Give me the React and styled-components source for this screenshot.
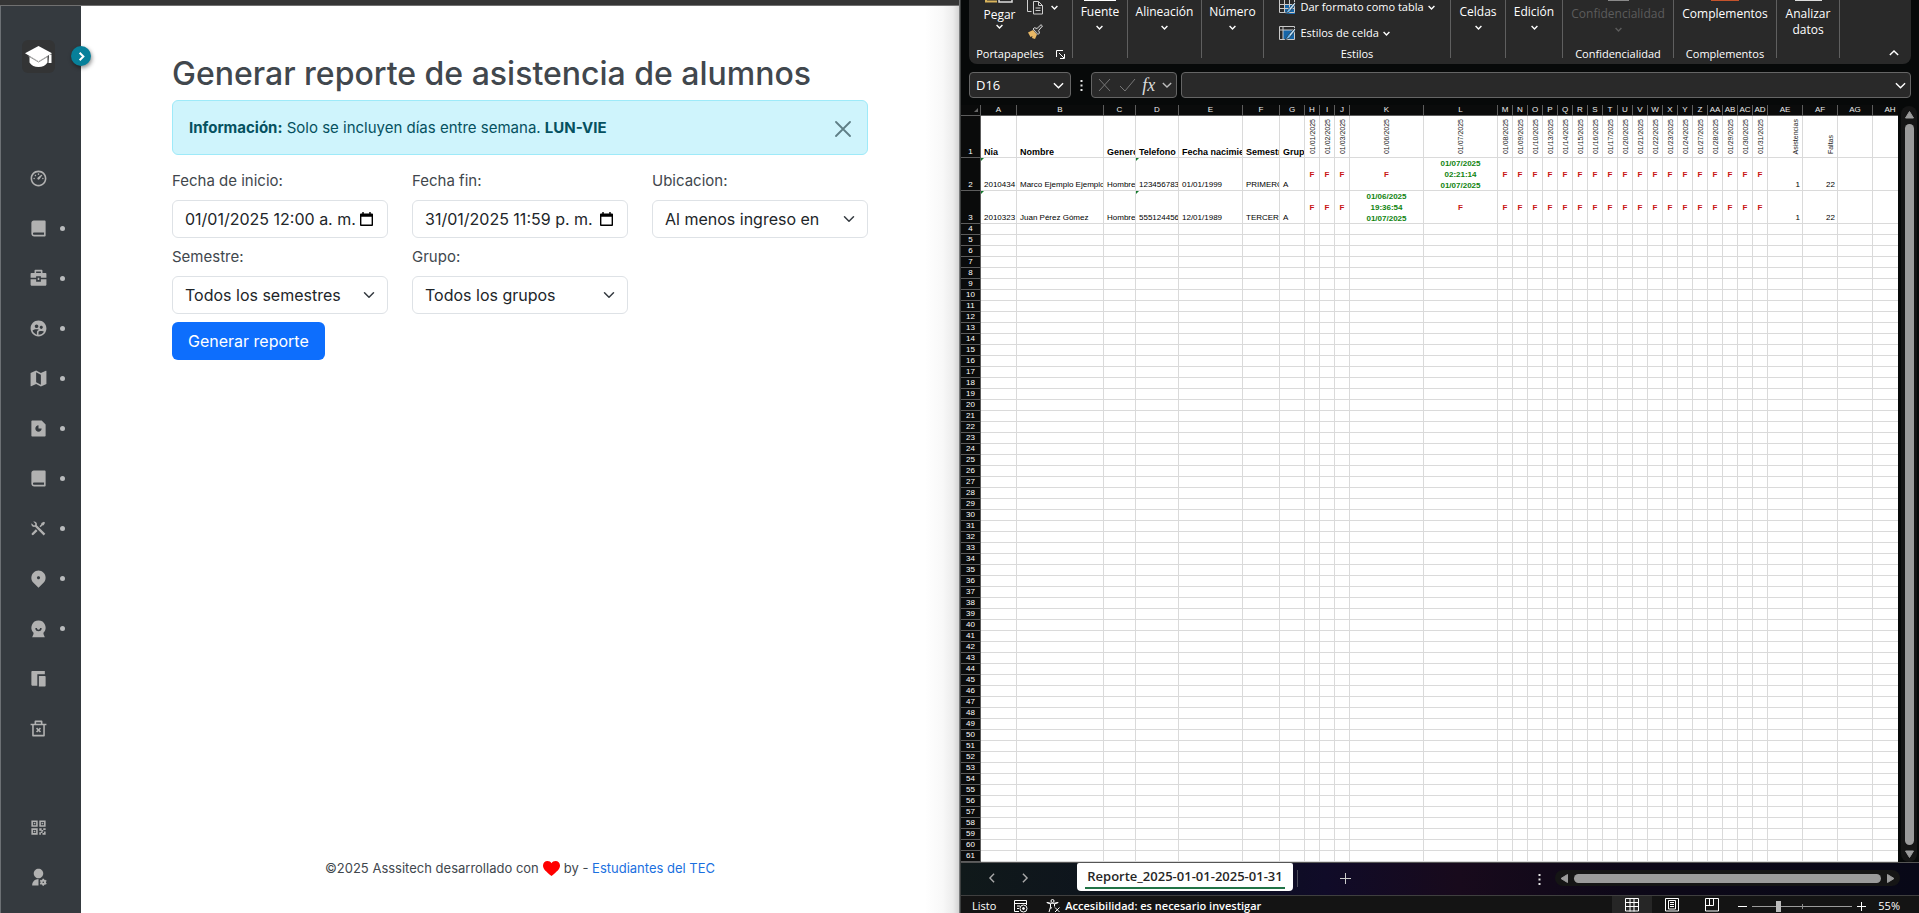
import React from 'react';
import styled, { createGlobalStyle } from 'styled-components';
import {
  RiDashboard3Line, RiBookFill, RiBriefcase4Fill, RiGroup2Fill, RiMap2Fill, RiFileChart2Fill,
  RiToolsFill, RiMapPin2Fill, RiDeleteBin2Line, RiQrCodeLine, RiUserSettingsFill,
} from 'react-icons/ri';

const Global = createGlobalStyle`
  *, *::before, *::after { box-sizing: border-box; }
  body { margin: 0; background: #070909; }
  button, input, select { font: inherit; color: inherit; margin: 0; }
  button { border: 0; background: none; padding: 0; }
  a { color: inherit; text-decoration: none; }
`;

const Desktop = styled.div`
  display: grid;
  grid-template-columns: minmax(0, 960fr) minmax(0, 959fr);
  min-height: 100vh;
`;

/* ---------- Web application ---------- */

const WebWindow = styled.div`
  display: flex;
  flex-direction: column;
  border-left: 1px solid #6c7074;
  border-right: 1px solid #77797a;
  background: #fff;
  font-family: Inter, 'Open Sans', sans-serif;
  color: #41474d;
`;
const BrowserEdge = styled.div`
  height: 6px;
  margin-left: -1px;
  background: #353535;
  border-bottom: 1px solid #707070;
`;
const WebBody = styled.div`
  flex: 1;
  display: flex;
`;
const Sidebar = styled.aside`
  position: relative;
  flex: 0 0 80px;
  display: flex;
  flex-direction: column;
  padding: 34px 0 12px;
  background: #353a3f;
`;
const Logo = styled.a`
  display: grid;
  place-items: center;
  width: 33px;
  height: 33px;
  margin: 0 0 80px 21px;
  border-radius: 6px;
  background: #333435;
`;
const Toggle = styled.button`
  position: absolute;
  top: 40px;
  right: -10px;
  display: grid;
  place-items: center;
  width: 20px;
  height: 20px;
  border-radius: 50%;
  background: #07809a;
  box-shadow: 1px 2px 4px rgba(0, 0, 0, 0.45);
`;
const NavList = styled.nav`
  display: flex;
  flex-direction: column;
  margin-top: ${(p) => (p.$end ? 'auto' : '0')};
`;
const NavLink = styled.a`
  display: flex;
  align-items: center;
  height: 50px;
  padding-left: 28px;
  gap: 12px;
  color: #b1b1b1;
`;
const Dot = styled.span`
  width: 5px;
  height: 5px;
  border-radius: 50%;
  background: #b9bbbd;
`;
const Main = styled.main`
  flex: 1;
  display: flex;
  flex-direction: column;
  background: linear-gradient(to left, #d4d4d4 0, #ececec 6px, #f8f8f8 16px, #fff 34px);
`;
const Container = styled.div`
  width: 100%;
  max-width: 720px;
  margin: 0 auto;
  padding: 49px 12px 24px;
`;
const Title = styled.h1`
  margin: 0 0 7px;
  font-size: 32px;
  line-height: 38px;
  font-weight: 500;
  white-space: nowrap;
`;
const Alert = styled.div`
  display: flex;
  justify-content: space-between;
  align-items: center;
  height: 55px;
  margin-bottom: 15px;
  padding: 0 16px;
  border: 1px solid #9eeaf9;
  border-radius: 6px;
  background: #cff4fc;
  color: #055160;
  font-size: 15px;
  line-height: 22px;
`;
const CloseButton = styled.button`
  display: grid;
  margin-top: 2px;
  color: #5f7f86;
`;
const FormGrid = styled.form`
  display: grid;
  grid-template-columns: repeat(3, minmax(0, 1fr));
  column-gap: 24px;
  row-gap: 8px;
`;
const Field = styled.div`
  display: flex;
  flex-direction: column;
  gap: 8px;
  font-size: 15px;
  line-height: 22px;
`;
const ControlBox = styled.div`
  display: flex;
  align-items: center;
  height: 38px;
  padding: 0 12px;
  border: 1px solid #dee2e6;
  border-radius: 6px;
  background: #fff;
  color: #212529;
  font-size: 16px;
`;
const DateInput = styled.input`
  flex: 1;
  min-width: 0;
  padding: 0;
  border: 0;
  outline: 0;
  background: none;
`;
const Picker = styled.button`
  display: grid;
  margin-right: 2px;
`;
const Select = styled.select`
  flex: 1;
  min-width: 0;
  padding: 0;
  border: 0;
  outline: 0;
  appearance: none;
  background: none;
`;
const Submit = styled.button`
  justify-self: start;
  height: 38px;
  padding: 0 16px;
  border-radius: 6px;
  background: #0d6efd;
  color: #fff;
  font-size: 16px;
  white-space: nowrap;
`;
const Footer = styled.footer`
  display: flex;
  justify-content: center;
  align-items: center;
  gap: 4px;
  margin-top: auto;
  padding-bottom: 36px;
  font-size: 13px;
  line-height: 20px;
`;
const FooterLink = styled.a`
  color: #1a70e0;
`;

/* ---------- Spreadsheet ---------- */

const SheetWindow = styled.div`
  display: flex;
  flex-direction: column;
  border-left: 1px solid #3d3f3f;
  background: #070909;
  color: #fff;
  font-family: 'Open Sans', 'Noto Sans', sans-serif;
  font-size: 12px;
`;
const Ribbon = styled.div`
  display: flex;
  height: 64px;
  margin: 0 8px;
  padding-bottom: 6px;
  border-radius: 0 0 8px 8px;
  background: #292929;
  overflow: hidden;
`;
const Group = styled.section`
  flex: 0 1 ${(p) => p.$w}px;
  display: flex;
  flex-direction: column;
  justify-content: space-between;
  align-items: center;
  border-right: 1px solid #5f5f5f;
  line-height: 16px;
  white-space: nowrap;
`;
const GroupBody = styled.div`
  display: flex;
  gap: ${(p) => p.$gap || 0}px;
`;
const Tool = styled.button`
  display: flex;
  flex-direction: column;
  align-items: center;
  color: ${(p) => (p.$off ? '#5c5c5c' : '#fff')};
  font-size: 12px;
  line-height: 16px;
`;
const IconEdge = styled.span`
  width: ${(p) => p.$w}px;
  height: 1px;
  margin-bottom: ${(p) => p.$gap || 3}px;
  background: ${(p) => p.$c};
`;
const ToolIcon = styled.button`
  display: flex;
  align-items: center;
  gap: 8px;
`;
const Stack = styled.div`
  display: flex;
  flex-direction: column;
  align-items: flex-start;
  gap: ${(p) => p.$gap}px;
`;
const StyleButton = styled.button`
  display: flex;
  align-items: center;
  gap: 4px;
  height: 14px;
  font-size: 11px;
  line-height: 14px;
`;
const GroupName = styled.div`
  display: flex;
  align-items: center;
  gap: 12px;
  margin-bottom: -4px;
  font-size: 11px;
  line-height: 16px;
`;
const RibbonEnd = styled.div`
  flex: 1;
  display: flex;
  justify-content: flex-end;
  align-items: flex-end;
  padding: 0 12px 0 0;
`;
const FormulaRow = styled.div`
  display: flex;
  align-items: center;
  margin: 8px 8px 7px;
`;
const Box = styled.div`
  display: flex;
  align-items: center;
  justify-content: space-between;
  flex: ${(p) => (p.$w ? `0 0 ${p.$w}px` : '1')};
  min-width: 0;
  height: 26px;
  padding: 0 ${(p) => p.$pad || 4}px;
  border: 1px solid #656565;
  border-radius: 4px;
  background: #292929;
`;
const BoxInput = styled.input`
  flex: 1;
  width: 100%;
  min-width: 0;
  padding: 0;
  border: 0;
  outline: 0;
  background: none;
  font-size: 13px;
`;
const Fx = styled.span`
  font: italic 400 18px 'Liberation Serif', serif;
  color: #dcdcdc;
`;
const DotsSlot = styled.div`
  display: grid;
  place-items: center;
  flex: 0 0 20px;
`;
const Spacer = styled.div`
  flex: ${(p) => (p.$w ? `0 0 ${p.$w}px` : '1')};
`;

const SheetArea = styled.div`
  flex: 1;
  display: flex;
  border-bottom: 1px solid #555;
`;
const TableClip = styled.div`
  flex: 1;
  min-width: 0;
  overflow: hidden;
  background: #fff;
`;
const Table = styled.table`
  table-layout: fixed;
  width: 947px;
  border-spacing: 0;
  color: #000;
  font: 8px/10px 'Liberation Sans', Arial, sans-serif;
`;
const ColHead = styled.th`
  height: 11px;
  padding: 0;
  border-right: 1px solid #5d5d5d;
  border-bottom: 1px solid #5d5d5d;
  background: #0a0b0b;
  color: #ededed;
  font-weight: 400;
`;
const RowHead = styled(ColHead)`
  vertical-align: bottom;
  color: #fff;
`;
const Row = styled.tr`
  height: ${(p) => p.$h || 11}px;
`;
const Cell = styled.td`
  position: relative;
  padding: 0 ${(p) => (p.$edge ? 2 : 0)}px 0 ${(p) => (p.$align ? 0 : 3)}px;
  border-right: 1px solid #dadada;
  border-bottom: 1px solid #dadada;
  overflow: hidden;
  white-space: nowrap;
  text-align: ${(p) => p.$align || 'left'};
  vertical-align: ${(p) => (p.$mid ? 'middle' : 'bottom')};
  font-weight: ${(p) => (p.$bold ? 700 : 400)};
  color: ${(p) => p.$c || '#000'};
`;
const Stamp = styled.span`
  display: block;
  margin-bottom: -1px;
  line-height: 11px;
  white-space: pre;
`;
const NameCell = styled(Cell)`
  font-size: 9px;
`;
const Vertical = styled.span`
  display: inline-block;
  writing-mode: vertical-rl;
  transform: rotate(180deg);
  vertical-align: bottom;
  margin-bottom: 3px;
  color: #222;
  font-size: 7px;
  line-height: 9px;
`;
const Flag = styled.span`
  position: absolute;
  top: 0;
  left: 0;
  border-top: 3px solid #137a2c;
  border-right: 3px solid transparent;
`;
const ScrollColumn = styled.div`
  flex: 0 0 21px;
  display: flex;
  padding: 1px 2px 0 3px;
`;
const VTrack = styled.div`
  flex: 1;
  display: flex;
  flex-direction: column;
  align-items: center;
  gap: 5px;
  padding: 4px 0 3px;
  border-radius: 8px;
  background: #151515;
`;
const VThumb = styled.div`
  flex: 1;
  width: 9px;
  border-radius: 5px;
  background: #9b9b9b;
`;
const TabStrip = styled.div`
  display: flex;
  align-items: flex-start;
  height: 32px;
  background: linear-gradient(to right, #10191a 0, #0c1020 28%, #100b28 38%, #180a1c 52%, #0d0818 70%, #080817 100%);
`;
const TabArrows = styled.div`
  flex: 0 0 116px;
  display: flex;
  gap: 23px;
  padding: 10px 0 0 26px;
`;
const SheetTab = styled.button`
  height: 28px;
  min-width: 216px;
  padding: 0 8px;
  border-radius: 2px 2px 4px 4px;
  background: #fff;
  color: #262626;
  font-weight: 600;
  font-size: 13px;
`;
const TabName = styled.span`
  display: block;
  padding-bottom: 1px;
  border-bottom: 2px solid #217346;
  line-height: 20px;
  white-space: nowrap;
`;
const TabRule = styled.span`
  width: 1px;
  height: 17px;
  margin: 7px 0 0 4px;
  background: #4b4b59;
`;
const AddTab = styled.button`
  margin: 8px 0 0 42px;
`;
const StripDots = styled.div`
  margin: 9px 14px 0 auto;
`;
const HTrack = styled.div`
  flex: 0 1 345px;
  display: flex;
  align-items: center;
  gap: 5px;
  height: 16px;
  margin: 7px 19px 0 0;
  padding: 0 5px;
  border-radius: 8px;
  background: #151515;
`;
const HThumb = styled.div`
  flex: 1;
  height: 9px;
  border-radius: 5px;
  background: #9b9b9b;
`;
const StatusBar = styled.div`
  display: flex;
  align-items: center;
  height: 19px;
  padding: 2px 19px 0 11px;
  border-top: 1px solid #3f3f3f;
  background: #141414;
  line-height: 16px;
  white-space: nowrap;
`;
const StatusText = styled.span`
  font-size: 11px;
  font-weight: ${(p) => (p.$bold ? 600 : 400)};
`;
const StatusButton = styled.button`
  display: flex;
  align-items: center;
  gap: 4px;
  margin-left: 18px;
`;
const ViewButton = styled.button`
  display: grid;
  place-items: center;
  width: 40px;
  height: 18px;
  margin-top: -2px;
  background: ${(p) => (p.$on ? '#262626' : 'none')};
`;
const Zoom = styled.input`
  appearance: none;
  width: 100px;
  height: 11px;
  margin: 0 5px;
  background:
    linear-gradient(#8d8d8d, #8d8d8d) 50px 3px / 1px 5px no-repeat,
    linear-gradient(#9b9b9b, #9b9b9b) 0 5px / 100% 1px no-repeat;
  &::-webkit-slider-thumb {
    appearance: none;
    width: 5px;
    height: 11px;
    background: #bcbcbc;
  }
`;

const Chevron = ({ w = 7, dir = 'down', sw = 1.4, c = 'currentColor' }) => {
  const r = { down: 0, up: 180, left: 90, right: 270 }[dir];
  return (
    <svg width={w} height={w} viewBox="0 0 12 12" fill="none" stroke={c} strokeWidth={(sw * 12) / w}>
      <path d="M1 3.5 6 8.5 11 3.5" transform={`rotate(${r} 6 6)`} />
    </svg>
  );
};
const SelectChevron = () => (
  <svg width="12" height="12" viewBox="0 0 16 16" fill="none" stroke="#343a40" strokeWidth="2" strokeLinecap="round" strokeLinejoin="round"><path d="m2 5 6 6 6-6" /></svg>
);
const Triangle = ({ d }) => (
  <svg width="9" height="9" viewBox="0 0 9 9" fill="#9b9b9b" stroke="#9b9b9b" strokeLinejoin="round"><path d={d} /></svg>
);
const Dots = () => (
  <svg width="3" height="11" viewBox="0 0 3 11" fill="#e6e6e6"><path d="M.5 0h2v2h-2zM.5 4.500h2v2h-2zM.5 9h2v2h-2z" /></svg>
);
const Cap = () => (
  <svg width="27" height="22" viewBox="0 0 27 22">
    <path d="M4.500 10v6.500c2 3 5 4.500 9 4.500s7-1.500 9-4.500V10l-9 5z" fill="#fff" />
    <path d="M13.500 0 27 7.200 13.500 15.200 0 7.200z" fill="#fff" />
    <path d="M3 9.800 13.500 16l10-6" fill="none" stroke="#777" strokeWidth=".8" />
    <path d="M24 8.500h2.500V17h-3z" fill="#fff" />
  </svg>
);
const BustIcon = () => (
  <svg width="19" height="19" viewBox="0 0 24 24" fill="currentColor"><path fillRule="evenodd" d="M12 2a9 9 0 0 1 6.300 15.400V19l1.700 4H4l1.700-4v-1.600A9 9 0 0 1 12 2zM8 11.500a4 4 0 0 0 8 0h-2a2 2 0 0 1-4 0z" /></svg>
);
const CopiesIcon = () => (
  <svg width="19" height="19" viewBox="0 0 24 24" fill="currentColor"><path d="M4 2.500h16v4.200H10.500V21H4a1 1 0 0 1-1-1V3.500a1 1 0 0 1 1-1z" /><path d="M12.500 8.700H20a1 1 0 0 1 1 1V21a1 1 0 0 1-1 1h-7.500z" /></svg>
);
const CalendarIcon = () => (
  <svg width="13" height="14" viewBox="0 0 14 15"><path fill="#000" fillRule="evenodd" d="M2.500 0h1.500v1.500h6V0h1.500v1.500H13q1 0 1 1V14q0 1-1 1H1q-1 0-1-1V2.500q0-1 1-1h1.500zM1.500 5v8.500h11V5z" /></svg>
);
const PasteEdge = () => (
  <svg width="28" height="3" viewBox="0 0 28 3" fill="none"><path d="M1 0v1.500h11" stroke="#d9b45c" strokeWidth="2" /><path d="M14 0v2h13V0" stroke="#ddd" strokeWidth="1.500" /></svg>
);
const CopyIcon = () => (
  <svg width="16" height="15" viewBox="0 0 16 15" fill="none" stroke="#cfcfcf"><path d="M4.500 11.500h-4V0" /><path d="M6.500 1.500h5l4 4v8.500h-9zM11.500 1.500v4h4M8.500 8h5M8.500 10.500h5" /></svg>
);
const BrushIcon = () => (
  <svg width="16" height="16" viewBox="0 0 16 16"><path d="M1 8.500 6 6l4 4.500-2 4.500-3-1 .5-2-2 1z" fill="#e8b765" /><path d="m6 5 5 5.500 1.500-1.500-.8-2.500L15.500 2 14 .7 10 4.500 7.500 3.700z" fill="#3a3a3a" stroke="#d8d8d8" /></svg>
);
const LaunchIcon = () => (
  <svg width="9" height="9" viewBox="0 0 9 9" fill="none" stroke="#fff"><path d="M.5 7V.5H7M3 3l5 5M8.500 4v4.500H4" /></svg>
);
const TableStyleIcon = ({ filled }) => (
  <svg width="17" height="15" viewBox="0 0 17 15">
    <path d={filled ? 'M4 4h11v9H4z' : 'M6 5h10v9H6z'} fill="#1565a8" />
    <path d={filled ? 'M.5.5h15v13H.5zM.5 4h15M4 .5v13' : 'M.5 0v12.500h15V0M.5 4.500h15M.5 8.500h15M5.500 0v12.500M10.500 0v12.500'} fill="none" stroke="#c9c9c9" />
    <path d="m16 2-7 7.500-3 4.500 4.500-2L16 5z" fill="#6db8ef" stroke="#292929" strokeWidth=".7" /><path d="m16 3-5 6" stroke="#eee" />
  </svg>
);
const GridIcon = () => (
  <svg width="14" height="14" viewBox="0 0 14 14" fill="none" stroke="#fff"><path d="M.5.5h13v12.500H.5zM.5 4.500h13M.5 8.500h13M5 .5v13M9 .5v13" /></svg>
);
const PageIcon = () => (
  <svg width="14" height="14" viewBox="0 0 14 14" fill="none" stroke="#fff"><path d="M.5.5h13v12.500H.5zM3.500 2.500h7v8.500h-7zM5 4.500h4M5 6.500h4M5 8.500h4" /></svg>
);
const BreakIcon = () => (
  <svg width="14" height="14" viewBox="0 0 14 14" fill="none" stroke="#fff"><path d="M.5.5h13v12.500H.5zM4.500.5v7M8.500.5v7M.5 7.500h8" /></svg>
);
const MacroIcon = () => (
  <svg width="14" height="13" viewBox="0 0 14 13" fill="none" stroke="#fff"><path d="M5 11.500H.5V.5h12V5M.5 3.500h12M3 6h3M3 8.500h2" /><circle cx="9.500" cy="8.500" r="3.500" /><circle cx="9.500" cy="8.500" r="1" fill="#fff" /></svg>
);
const AccessIcon = () => (
  <svg width="15" height="14" viewBox="0 0 15 14" fill="none" stroke="#fff"><circle cx="6.500" cy="2" r="1.500" /><path d="M.8 3.500 4.500 5v3L3 13M12.200 3.500 8.500 5v2.500M.8 3.500 6.500 4.500l5.700-1M4.500 9.500 6 8.500M9 8.500l4.500 4.500M13.500 8.500 9 13" /></svg>
);
const CornerMark = () => (
  <svg width="16" height="4" viewBox="0 0 16 4"><path d="M15 0v4h-4z" fill="#666" /></svg>
);

const NAV = [
  ['Panel', RiDashboard3Line, false], ['Materias', RiBookFill, true], ['Trabajo', RiBriefcase4Fill, true],
  ['Grupos', RiGroup2Fill, true], ['Mapa', RiMap2Fill, true], ['Reportes', RiFileChart2Fill, true],
  ['Biblioteca', RiBookFill, true], ['Herramientas', RiToolsFill, true], ['Ubicaciones', RiMapPin2Fill, true],
  ['Alumnos', BustIcon, true], ['Copias', CopiesIcon, false], ['Papelera', RiDeleteBin2Line, false],
];
const NAV_END = [['QR', RiQrCodeLine, false], ['Cuenta', RiUserSettingsFill, false]];

const Nav = ({ items, end, label }) => (
  <NavList $end={end} aria-label={label}>
    {items.map(([name, Icon, dot]) => (
      <NavLink key={name} href="#" aria-label={name}><Icon size={19} />{dot && <Dot />}</NavLink>
    ))}
  </NavList>
);

const DateField = ({ id, label, value }) => (
  <Field>
    <label htmlFor={id}>{label}</label>
    <ControlBox>
      <DateInput id={id} type="text" defaultValue={value} />
      <Picker type="button" aria-label="Abrir calendario"><CalendarIcon /></Picker>
    </ControlBox>
  </Field>
);
const SelectField = ({ id, label, value }) => (
  <Field>
    <label htmlFor={id}>{label}</label>
    <ControlBox>
      <Select id={id}><option>{value}</option></Select>
      <SelectChevron />
    </ControlBox>
  </Field>
);

const COLS = [
  ['A', 36], ['B', 87], ['C', 32], ['D', 43], ['E', 64], ['F', 37], ['G', 25], ['H', 15], ['I', 15], ['J', 15], ['K', 74], ['L', 74],
  ...['M', 'N', 'O', 'P', 'Q', 'R', 'S', 'T', 'U', 'V', 'W', 'X', 'Y', 'Z', 'AA', 'AB', 'AC', 'AD'].map((c) => [c, 15]),
  ['AE', 35], ['AF', 35], ['AG', 35], ['AH', 35],
];
const FIELDS = ['Nia', 'Nombre', 'Genero', 'Telefono', 'Fecha nacimiento', 'Semestre', 'Grupo'];
const DAYS = ['01', '02', '03', '06', '07', '08', '09', '10', '13', '14', '15', '16', '17', '20', '21', '22', '23', '24', '27', '28', '29', '30', '31'];
const STUDENTS = [
  { data: ['2010434', 'Marco Ejemplo Ejemplo', 'Hombre', '1234567839', '01/01/1999', 'PRIMERO', 'A'], seen: { '07': '01/07/2025\n02:21:14\n01/07/2025' } },
  { data: ['2010323', 'Juan Pérez Gómez', 'Hombre', '5551244567', '12/01/1989', 'TERCERO', 'A'], seen: { '06': '01/06/2025\n19:36:54\n01/07/2025' } },
];
const EMPTY_ROWS = Array.from({ length: 58 }, (_, i) => i + 4);

function Sheet() {
  return (
    <Table>
      <colgroup><col width="20" />{COLS.map(([c, w]) => <col key={c} width={w} />)}</colgroup>
      <thead>
        <tr><ColHead><CornerMark /></ColHead>{COLS.map(([c]) => <ColHead key={c} scope="col">{c}</ColHead>)}</tr>
      </thead>
      <tbody>
        <Row $h={42}>
          <RowHead scope="row">1</RowHead>
          {FIELDS.map((f) => <NameCell key={f} $bold>{f}</NameCell>)}
          {DAYS.map((d) => <Cell key={d} $align="center"><Vertical>{`01/${d}/2025`}</Vertical></Cell>)}
          <Cell $align="right" $edge><Vertical>Asistencias</Vertical></Cell>
          <Cell $align="right" $edge><Vertical>Faltas</Vertical></Cell>
          <Cell /><Cell />
        </Row>
        {STUDENTS.map((s, i) => (
          <Row key={s.data[0]} $h={33}>
            <RowHead scope="row">{i + 2}</RowHead>
            {s.data.map((v, k) => <Cell key={k}>{(k === 0 || k === 3) && <Flag />}{v}</Cell>)}
            {DAYS.map((d) => (
              <Cell key={d} $align="center" $mid $bold $c={s.seen[d] ? '#0f840f' : '#c81414'}><Stamp>{s.seen[d] || 'F'}</Stamp></Cell>
            ))}
            <Cell $align="right" $edge>1</Cell>
            <Cell $align="right" $edge>22</Cell>
            <Cell /><Cell />
          </Row>
        ))}
        {EMPTY_ROWS.map((n) => (
          <Row key={n}><RowHead scope="row">{n}</RowHead>{COLS.map(([c]) => <Cell key={c} />)}</Row>
        ))}
      </tbody>
    </Table>
  );
}

export default function App() {
  return (
    <Desktop>
      <Global />
      <WebWindow>
        <BrowserEdge />
        <WebBody>
          <Sidebar>
            <Logo href="#" aria-label="Inicio"><Cap /></Logo>
            <Toggle aria-label="Abrir menú"><Chevron w={9} dir="right" sw={2} c="#fff" /></Toggle>
            <Nav items={NAV} label="Principal" />
            <Nav items={NAV_END} label="Cuenta" end />
          </Sidebar>
          <Main>
            <Container>
              <Title>Generar reporte de asistencia de alumnos</Title>
              <Alert role="alert">
                <span><strong>Información:</strong> Solo se incluyen días entre semana. <strong>LUN-VIE</strong></span>
                <CloseButton aria-label="Cerrar">
                  <svg width="16" height="16" viewBox="0 0 16 16" stroke="currentColor" strokeWidth="1.800" strokeLinecap="round"><path d="m1 1 14 14M15 1 1 15" /></svg>
                </CloseButton>
              </Alert>
              <FormGrid onSubmit={(e) => e.preventDefault()}>
                <DateField id="inicio" label="Fecha de inicio:" value="01/01/2025 12:00 a. m." />
                <DateField id="fin" label="Fecha fin:" value="31/01/2025 11:59 p. m." />
                <SelectField id="ubicacion" label="Ubicacion:" value="Al menos ingreso en" />
                <SelectField id="semestre" label="Semestre:" value="Todos los semestres" />
                <SelectField id="grupo" label="Grupo:" value="Todos los grupos" />
                <span />
                <Submit type="submit">Generar reporte</Submit>
              </FormGrid>
            </Container>
            <Footer>
              <span>©2025 Asssitech desarrollado con</span>
              <svg width="17" height="15" viewBox="0 0 17 15"><path fill="#f00" d="M8.500 15C3 10.500 0 8 0 4.500 0 2 2 0 4.500 0c1.700 0 3.200.9 4 2.300C9.300.9 10.800 0 12.500 0 15 0 17 2 17 4.500c0 3.500-3 6-8.500 10.500z" /></svg>
              <span>by - <FooterLink href="#">Estudiantes del TEC</FooterLink></span>
            </Footer>
          </Main>
        </WebBody>
      </WebWindow>

      <SheetWindow>
        <Ribbon>
          <Group $w={104}>
            <GroupBody $gap={11}>
              <Tool><PasteEdge /><Spacer $w={4} />Pegar<Chevron /></Tool>
              <Stack $gap={9}>
                <ToolIcon aria-label="Copiar"><CopyIcon /><Chevron /></ToolIcon>
                <ToolIcon aria-label="Copiar formato"><BrushIcon /></ToolIcon>
              </Stack>
            </GroupBody>
            <GroupName>Portapapeles <LaunchIcon /></GroupName>
          </Group>
          <Group $w={55}><Tool><IconEdge $w={32} $c="#fff" />Fuente<Spacer $w={4} /><Chevron /></Tool></Group>
          <Group $w={74}><Tool><IconEdge $w={20} $c="#292929" />Alineación<Spacer $w={4} /><Chevron /></Tool></Group>
          <Group $w={62}><Tool><IconEdge $w={20} $c="#292929" />Número<Spacer $w={4} /><Chevron /></Tool></Group>
          <Group $w={187}>
            <Stack $gap={12}>
              <StyleButton><TableStyleIcon />Dar formato como tabla<Chevron /></StyleButton>
              <StyleButton><TableStyleIcon filled />Estilos de celda<Chevron /></StyleButton>
            </Stack>
            <GroupName>Estilos</GroupName>
          </Group>
          <Group $w={55}><Tool><IconEdge $w={20} $c="#292929" />Celdas<Spacer $w={4} /><Chevron /></Tool></Group>
          <Group $w={57}><Tool><IconEdge $w={20} $c="#292929" />Edición<Spacer $w={4} /><Chevron /></Tool></Group>
          <Group $w={111}>
            <Tool $off><IconEdge $w={21} $gap={5} $c="#8a8a8a" />Confidencialidad<Spacer $w={4} /><Chevron /></Tool>
            <GroupName>Confidencialidad</GroupName>
          </Group>
          <Group $w={103}>
            <Tool><IconEdge $w={28} $gap={5} $c="#c4532c" />Complementos</Tool>
            <GroupName>Complementos</GroupName>
          </Group>
          <Group $w={63}><Tool><IconEdge $w={27} $gap={5} $c="#ddd" />Analizar<span>datos</span></Tool></Group>
          <RibbonEnd><Chevron w={10} dir="up" sw={1.4} /></RibbonEnd>
        </Ribbon>

        <FormulaRow>
          <Box $w={102} $pad={6}>
            <BoxInput aria-label="Cuadro de nombres" defaultValue="D16" />
            <Chevron w={11} />
          </Box>
          <DotsSlot><Dots /></DotsSlot>
          <Box $w={86} $pad={4}>
            <svg width="16" height="16" viewBox="0 0 16 16" stroke="#777" fill="none"><path d="m3 2 11 12M14 2 3 14" /></svg>
            <svg width="17" height="14" viewBox="0 0 17 14" stroke="#777" fill="none"><path d="m1 8 5 5L16 1" /></svg>
            <Fx>fx</Fx>
            <Chevron w={10} c="#bbb" />
          </Box>
          <Spacer $w={4} />
          <Box>
            <BoxInput aria-label="Barra de fórmulas" />
            <Chevron w={11} />
          </Box>
        </FormulaRow>

        <SheetArea>
          <TableClip><Sheet /></TableClip>
          <ScrollColumn>
            <VTrack>
              <Triangle d="M4.500 1.500 8.500 8h-8z" />
              <VThumb />
              <Triangle d="M4.500 7.500.5 1h8z" />
            </VTrack>
          </ScrollColumn>
        </SheetArea>

        <TabStrip>
          <TabArrows><Chevron w={10} dir="left" c="#aaa" /><Chevron w={10} dir="right" c="#aaa" /></TabArrows>
          <SheetTab><TabName>Reporte_2025-01-01-2025-01-31</TabName></SheetTab>
          <TabRule />
          <AddTab aria-label="Nueva hoja">
            <svg width="11" height="11" viewBox="0 0 11 11" stroke="#ccc"><path d="M5.500 0v11M0 5.500h11" /></svg>
          </AddTab>
          <StripDots><Dots /></StripDots>
          <HTrack>
            <Triangle d="M1 4.500 7.500.5v8z" />
            <HThumb />
            <Triangle d="M8 4.500 1.500.5v8z" />
          </HTrack>
        </TabStrip>

        <StatusBar>
          <StatusText>Listo</StatusText>
          <StatusButton aria-label="Grabar macro"><MacroIcon /></StatusButton>
          <StatusButton><AccessIcon /><StatusText $bold>Accesibilidad: es necesario investigar</StatusText></StatusButton>
          <Spacer />
          <ViewButton $on aria-label="Normal"><GridIcon /></ViewButton>
          <ViewButton aria-label="Diseño de página"><PageIcon /></ViewButton>
          <ViewButton aria-label="Salto de página"><BreakIcon /></ViewButton>
          <Spacer $w={6} />
          <svg width="9" height="9" viewBox="0 0 9 9" stroke="#fff"><path d="M0 4.500h9" /></svg>
          <Zoom type="range" min="0" max="100" defaultValue="25" aria-label="Zoom" />
          <svg width="9" height="9" viewBox="0 0 9 9" stroke="#fff"><path d="M0 4.500h9M4.500 0v9" /></svg>
          <Spacer $w={12} />
          <StatusText>55%</StatusText>
        </StatusBar>
      </SheetWindow>
    </Desktop>
  );
}
